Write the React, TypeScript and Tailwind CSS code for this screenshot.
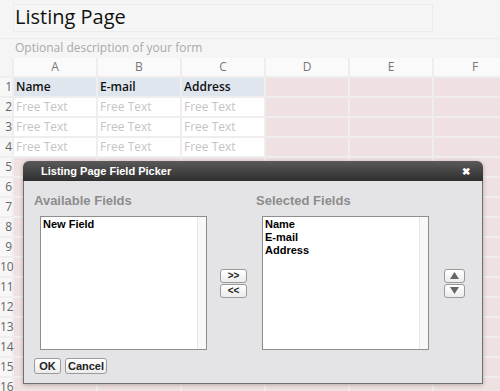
import React from "react";

const cols = ["A", "B", "C", "D", "E", "F"];
const headers = ["Name", "E-mail", "Address"];

function Cell({ row, col }: { row: number; col: number }) {
  if (row <= 4 && col < 3) {
    if (row === 1) {
      return (
        <div className="h-[18px] bg-[#dfe6ee] pl-[2px] text-[12px] font-semibold leading-[18px] text-[#111]">
          {headers[col]}
        </div>
      );
    }
    return (
      <div className="h-[18px] bg-white pl-[2px] text-[12px] leading-[18px] text-[#c4c4c4]">
        Free Text
      </div>
    );
  }
  return <div className="h-[18px] bg-[#efe0e1]" />;
}

function ListBox({ items }: { items: string[] }) {
  return (
    <div className="flex h-[134px] w-[167px] border border-[#8e8e8e] bg-white">
      <div className="flex-1 pl-[2px] pt-[1px] text-[11px] font-semibold leading-[13px] text-black">
        {items.map((it) => (
          <div key={it}>{it}</div>
        ))}
      </div>
      <div className="w-[9px] border-l border-[#e6e6e6] bg-[#f8f8f8]" />
    </div>
  );
}

function SmallBtn({ children, w }: { children: React.ReactNode; w: string }) {
  return (
    <button
      className={`flex h-[14px] ${w} items-center justify-center rounded-[3px] border border-[#9a9a9a] bg-gradient-to-b from-white to-[#ececec] font-['Liberation_Sans',sans-serif] text-[10px] font-bold leading-none text-[#222]`}
    >
      {children}
    </button>
  );
}

export default function App() {
  return (
    <div className="relative h-[391px] w-[500px] overflow-hidden bg-[#f5f5f5] font-['Open_Sans',sans-serif]">
      {/* Title */}
      <div className="ml-[13px] mt-[4px] h-[28px] w-[420px] border border-[#ececec] bg-[#f6f6f6] pl-[1px] text-[20px] leading-[24px] text-[#111]">
        Listing Page
      </div>
      <div className="mt-[6px] h-[20px] border-t border-[#ebebeb] pl-[15px] pt-[1px] text-[12px] leading-[16px] text-[#aaa]">
        Optional description of your form
      </div>

      {/* Sheet */}
      <div className="grid grid-cols-[12px_repeat(6,82px)] gap-[2px] bg-[#efeded]">
        <div className="h-[18px] bg-[#f5f5f5]" />
        {cols.map((c) => (
          <div
            key={c}
            className="h-[18px] bg-[#fafafa] text-center text-[12px] leading-[18px] text-[#777]"
          >
            {c}
          </div>
        ))}
        {Array.from({ length: 16 }, (_, i) => i + 1).map((row) => (
          <React.Fragment key={row}>
            <div className="h-[18px] bg-[#f7f7f7] text-right text-[12px] leading-[18px] text-[#666]">
              {row}
            </div>
            {cols.map((c, ci) => (
              <Cell key={c} row={row} col={ci} />
            ))}
          </React.Fragment>
        ))}
      </div>

      {/* Dialog */}
      <div className="absolute left-[23px] top-[161px] w-[460px] rounded-t-[6px] shadow-[0_1px_4px_rgba(0,0,0,0.25)]">
        <div className="flex h-[20px] items-center justify-between rounded-t-[6px] bg-gradient-to-b from-[#5a5a5a] to-[#2f2f2f] pl-[18px] pr-[13px] font-['Liberation_Sans',sans-serif] text-[11px] font-bold text-white">
          <span>Listing Page Field Picker</span>
          <span className="text-[10px]">✖</span>
        </div>
        <div className="h-[203px] border border-t-0 border-[#6f6f6f] bg-[#e4e4e6] font-['Liberation_Sans',sans-serif]">
          <div className="flex pt-[13px]">
            <div className="ml-[10px] w-[174px]">
              <div className="h-[22px] text-[13px] font-bold leading-[14px] text-[#8c8c8c]">
                Available Fields
              </div>
              <div className="ml-[6px]">
                <ListBox items={["New Field"]} />
              </div>
            </div>
            <div className="ml-[12px] flex w-[27px] flex-col justify-center gap-[1px] pt-[22px]">
              <SmallBtn w="w-[27px]">&gt;&gt;</SmallBtn>
              <SmallBtn w="w-[27px]">&lt;&lt;</SmallBtn>
            </div>
            <div className="ml-[9px] w-[173px]">
              <div className="h-[22px] text-[13px] font-bold leading-[14px] text-[#8c8c8c]">
                Selected Fields
              </div>
              <div className="ml-[6px]">
                <ListBox items={["Name", "E-mail", "Address"]} />
              </div>
            </div>
            <div className="ml-[15px] flex w-[21px] flex-col justify-center gap-[1px] pt-[22px]">
              <SmallBtn w="w-[21px]">
                <svg width="9" height="7" viewBox="0 0 9 7">
                  <path d="M4.5 0 L9 7 L0 7 Z" fill="#666" />
                </svg>
              </SmallBtn>
              <SmallBtn w="w-[21px]">
                <svg width="9" height="7" viewBox="0 0 9 7">
                  <path d="M0 0 L9 0 L4.5 7 Z" fill="#666" />
                </svg>
              </SmallBtn>
            </div>
          </div>
          <div className="ml-[10px] mt-[8px] flex gap-[4px]">
            <button className="flex h-[16px] w-[27px] items-center justify-center rounded-[3px] border border-[#9a9a9a] bg-gradient-to-b from-white to-[#ececec] text-[11px] font-bold text-[#222]">
              OK
            </button>
            <button className="flex h-[16px] w-[42px] items-center justify-center rounded-[3px] border border-[#9a9a9a] bg-gradient-to-b from-white to-[#ececec] text-[11px] font-bold text-[#222]">
              Cancel
            </button>
          </div>
        </div>
      </div>
    </div>
  );
}
